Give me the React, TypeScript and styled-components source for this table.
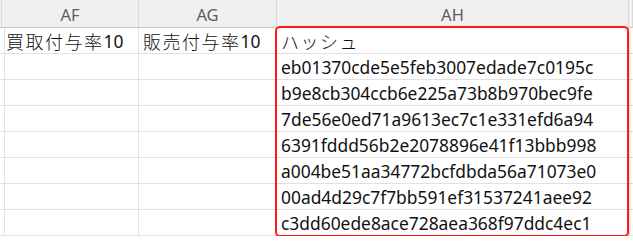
import styled, { createGlobalStyle } from 'styled-components';

const GlobalStyle = createGlobalStyle`
    html, body {
        margin: 0;
        padding: 0;
        background: #ffffff;
    }
    body {
        font-family: "Noto Sans", "Noto Sans CJK JP", sans-serif;
        overflow: hidden;
    }
`;

const columns = [
    { key: 'AE', width: 2 },
    { key: 'AF', width: 137 },
    { key: 'AG', width: 138 },
    { key: 'AH', width: 352 },
    { key: 'AI', width: 4 },
];

const hashes = [
    'eb01370cde5e5feb3007edade7c0195c',
    'b9e8cb304ccb6e225a73b8b970bec9fe',
    '7de56e0ed71a9613ec7c1e331efd6a94',
    '6391fddd56b2e2078896e41f13bbb998',
    'a004be51aa34772bcfdbda56a71073e0',
    '00ad4d29c7f7bb591ef31537241aee92',
    'c3dd60ede8ace728aea368f97ddc4ec1',
];

const rows: string[][] = [
    ['', '買取付与率10', '販売付与率10', 'ハッシュ', ''],
    ...hashes.map(h => ['', '', '', h, '']),
];

const Sheet = styled.div`
    position: relative;
    display: grid;
    grid-template-columns: ${columns.map(c => `${c.width}px`).join(' ')};
    grid-auto-rows: 26px;
    grid-template-rows: 28px;
    width: 633px;
`;

const HeaderCell = styled.div`
    display: flex;
    align-items: center;
    justify-content: center;
    background: #f0f0f0;
    border-right: 1px solid #d9d9d9;
    border-bottom: 1px solid #c6c6c6;
    color: #5e5e5e;
    font-family: "Noto Sans", sans-serif;
    font-size: 16.5px;
    padding-top: 2px;
    box-sizing: border-box;
    overflow: hidden;
`;

const Cell = styled.div`
    display: flex;
    align-items: center;
    padding-left: 4px;
    border-right: 1px solid #e1e1e1;
    border-bottom: 1px solid #e1e1e1;
    box-sizing: border-box;
    white-space: nowrap;
    overflow: hidden;
    color: #111;
    font-family: "Noto Sans", sans-serif;
    font-size: 17.4px;
`;

const Jp = styled.span`
    font-family: "Noto Sans CJK JP", sans-serif;
    font-weight: 300;
    font-size: 18px;
    letter-spacing: 1.5px;
`;

const splitJp = (s: string) => s.match(/[^\x00-\x7f]+|[\x00-\x7f]+/g) ?? [];

const Highlight = styled.div`
    position: absolute;
    left: 275px;
    top: 26px;
    width: 354px;
    height: 211px;
    border: 2px solid #ff1a1a;
    border-radius: 5px;
    box-sizing: border-box;
    box-shadow: 1px 1px 3px rgba(0, 0, 0, 0.18);
    pointer-events: none;
`;

export default function App() {
    return (
        <>
            <GlobalStyle />
            <Sheet>
                {columns.map(c => (
                    <HeaderCell key={c.key}>{c.width > 10 ? c.key : ''}</HeaderCell>
                ))}
                {rows.map((row, r) =>
                    row.map((value, c) => (
                        <Cell key={`${r}-${c}`}>
                            {splitJp(value).map((part, i) =>
                                /[^\x00-\x7f]/.test(part) ? <Jp key={i}>{part}</Jp> : part
                            )}
                        </Cell>
                    ))
                )}
                <Highlight />
            </Sheet>
        </>
    );
}
